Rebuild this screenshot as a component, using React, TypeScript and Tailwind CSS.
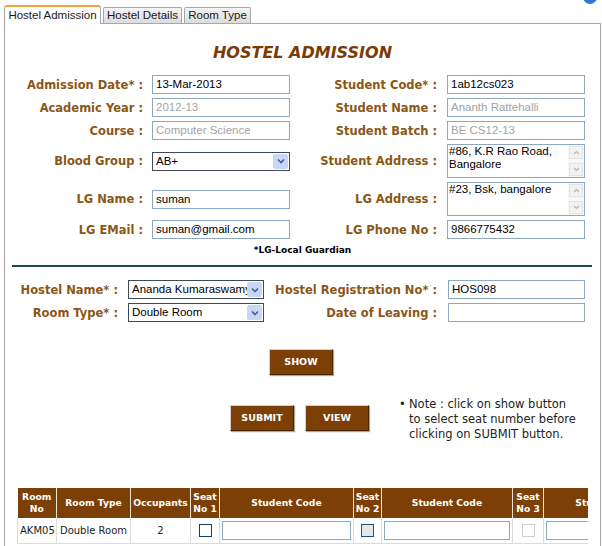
import React from "react";

const V = "font-['DejaVu_Sans',Verdana,sans-serif]";
const A = "font-['Liberation_Sans',Arial,sans-serif]";

function Label({ children, pr = "pr-[9px]" }: { children: React.ReactNode; pr?: string }) {
  return (
    <div className={`${V} ${pr} text-right text-[11.5px] font-bold leading-[14px] text-[#8b5716] whitespace-nowrap`}>
      {children}
    </div>
  );
}

function TextInput({ value = "", disabled = false }: { value?: string; disabled?: boolean }) {
  return (
    <div
      className={`${A} h-[19px] border border-[#8fa8c2] bg-white px-[3px] text-[11.5px] leading-[17px] whitespace-nowrap overflow-hidden ${
        disabled ? "text-[#a3a3a3]" : "text-black"
      }`}
    >
      {value}
    </div>
  );
}

function Select({ value }: { value: string }) {
  return (
    <div className={`${A} relative h-[19px] border border-[#3e4a5a] bg-white pl-[3px] pr-[18px] text-[11.5px] leading-[17px] text-black whitespace-nowrap overflow-hidden`}>
      {value}
      <div className="absolute right-[1px] top-[1px] flex h-[15px] w-[15px] items-center justify-center rounded-[2px] bg-[#c9d7f7]">
        <svg width="8" height="6" viewBox="0 0 8 6">
          <path d="M1 1.5 L4 4.5 L7 1.5" fill="none" stroke="#4a5f8a" strokeWidth="1.6" />
        </svg>
      </div>
    </div>
  );
}

function TextArea({ lines }: { lines: string[] }) {
  return (
    <div className={`${A} flex h-[34px] border border-[#8fa8c2] bg-white`}>
      <div className="flex-1 pl-[1px] text-[11.5px] leading-[13px] text-black overflow-hidden">
        {lines.map((l) => (
          <div key={l} className="whitespace-nowrap">{l}</div>
        ))}
      </div>
      <div className="flex w-[16px] flex-col justify-between bg-[#f7f7f7] p-[1px]">
        <div className="flex h-[13px] items-center justify-center border border-[#e4e4e4] bg-[#f2f2f2]">
          <svg width="7" height="5" viewBox="0 0 7 5">
            <path d="M1 4 L3.5 1.5 L6 4" fill="none" stroke="#b8b8b8" strokeWidth="1.2" />
          </svg>
        </div>
        <div className="flex h-[13px] items-center justify-center border border-[#e4e4e4] bg-[#f2f2f2]">
          <svg width="7" height="5" viewBox="0 0 7 5">
            <path d="M1 1 L3.5 3.5 L6 1" fill="none" stroke="#b8b8b8" strokeWidth="1.2" />
          </svg>
        </div>
      </div>
    </div>
  );
}

function Btn({ children }: { children: React.ReactNode }) {
  return (
    <div
      className={`${V} flex h-[26px] w-[64px] items-center justify-center border border-t-[#d9cfc4] border-l-[#d9cfc4] border-r-[#4a2600] border-b-[#4a2600] bg-[#7c3f06] text-[9.5px] font-bold text-white shadow-[1px_1px_1px_rgba(0,0,0,0.35)]`}
    >
      {children}
    </div>
  );
}

function Check({ variant }: { variant: "on" | "mid" | "off" }) {
  const cls =
    variant === "on"
      ? "border-[#1e3d63] bg-white"
      : variant === "mid"
      ? "border-[#2b4d78] bg-[#e3e7ec]"
      : "border-[#cfcfcf] bg-white";
  return <div className={`mx-auto h-[13px] w-[13px] border ${cls}`} />;
}

export default function App() {
  const th = `${V} border-r border-[#ede3d8] px-0 text-center text-[9.2px] font-bold leading-[12px] text-white whitespace-nowrap`;
  const td = `${V} border-r border-b border-[#dcdcdc] px-[2px] text-[10px] text-[#222] whitespace-nowrap`;
  return (
    <div className="relative h-[546px] w-[602px] overflow-hidden bg-white">
      <div className="absolute right-[5px] top-[-10px] h-[14px] w-[14px] rounded-full bg-[#2f78cc]" />
      <div className="pl-[4px] pt-[5px]">
        {/* Tabs */}
        <div className={`flex items-end gap-[2px] ${A} text-[11.5px] text-[#1a1a1a]`}>
          <div className="relative z-10 mb-[-1px] flex h-[19px] w-[97px] items-center justify-center rounded-t-[3px] border border-b-0 border-[#a8a8a8] border-t-[2px] border-t-[#f0a43a] bg-white">
            Hostel Admission
          </div>
          <div className="flex h-[16px] w-[79px] items-center justify-center rounded-t-[2px] border border-b-0 border-[#a8a8a8] bg-gradient-to-b from-[#f4f4f4] to-[#dcdcdc]">
            Hostel Details
          </div>
          <div className="flex h-[16px] w-[67px] items-center justify-center rounded-t-[2px] border border-b-0 border-[#a8a8a8] bg-gradient-to-b from-[#f4f4f4] to-[#dcdcdc]">
            Room Type
          </div>
        </div>

        {/* Panel */}
        <div className="h-[600px] w-[597px] border border-[#a8a8a8] bg-white">
          <div className={`${V} pt-[19px] text-center text-[16px] font-bold italic leading-[20px] text-[#7b3b06]`}>
            HOSTEL ADMISSION
          </div>

          <div className="mt-[12px] grid grid-cols-[147px_138px_157px_138px] items-center gap-y-[4px]">
            <Label>Admission Date* :</Label>
            <TextInput value="13-Mar-2013" />
            <Label pr="pr-[10px]">Student Code* :</Label>
            <TextInput value="1ab12cs023" />

            <Label>Academic Year :</Label>
            <TextInput value="2012-13" disabled />
            <Label pr="pr-[10px]">Student Name :</Label>
            <TextInput value="Ananth Rattehalli" disabled />

            <Label>Course :</Label>
            <TextInput value="Computer Science" disabled />
            <Label pr="pr-[10px]">Student Batch :</Label>
            <TextInput value="BE CS12-13" disabled />

            <Label>Blood Group :</Label>
            <Select value="AB+" />
            <Label pr="pr-[10px]">Student Address :</Label>
            <TextArea lines={["#86, K.R Rao Road,", "Bangalore"]} />

            <Label>LG Name :</Label>
            <TextInput value="suman" />
            <Label pr="pr-[10px]">LG Address :</Label>
            <TextArea lines={["#23, Bsk, bangalore"]} />

            <Label>LG EMail :</Label>
            <TextInput value="suman@gmail.com" />
            <Label pr="pr-[10px]">LG Phone No :</Label>
            <TextInput value="9866775432" />
          </div>

          <div className={`${V} mt-[5px] text-center text-[9px] font-bold leading-[12px] text-black`}>
            *LG-Local Guardian
          </div>

          <div className="ml-[7px] mt-[9px] h-[2px] w-[580px] bg-[#1f4c48]" />

          <div className="mt-[13px] grid grid-cols-[123px_136px_184px_137px] items-center gap-y-[4px]">
            <Label pr="pr-[10px]">Hostel Name* :</Label>
            <Select value="Ananda Kumaraswamy" />
            <Label pr="pr-[11px]">Hostel Registration No* :</Label>
            <TextInput value="HOS098" />

            <Label pr="pr-[10px]">Room Type* :</Label>
            <Select value="Double Room" />
            <Label pr="pr-[11px]">Date of Leaving :</Label>
            <TextInput value="" />
          </div>

          <div className="mt-[27px] flex justify-center pr-[3px]">
            <Btn>SHOW</Btn>
          </div>

          <div className="mt-[22px] flex items-start pl-[225px]">
            <div className="mt-[8px] flex gap-[11px]">
              <Btn>SUBMIT</Btn>
              <Btn>VIEW</Btn>
            </div>
            <div className={`${V} ml-[30px] flex text-[11.5px] leading-[15px] text-[#222]`}>
              <span className="w-[10px]">•</span>
              <div>
                Note : click on show button
                <br />
                to select seat number before
                <br />
                clicking on SUBMIT button.
              </div>
            </div>
          </div>

          <div className="ml-[12px] mt-[46px] w-[571px] overflow-hidden">
            <table className="w-[660px] table-fixed border-collapse">
              <colgroup>
                <col className="w-[39px]" />
                <col className="w-[74px]" />
                <col className="w-[60px]" />
                <col className="w-[29px]" />
                <col className="w-[134px]" />
                <col className="w-[28px]" />
                <col className="w-[131px]" />
                <col className="w-[31px]" />
                <col className="w-[134px]" />
              </colgroup>
              <thead>
                <tr className="h-[30px] bg-[#7c3f06]">
                  <th className={th}>Room<br />No</th>
                  <th className={th}>Room Type</th>
                  <th className={th}>Occupants</th>
                  <th className={th}>Seat<br />No 1</th>
                  <th className={th}>Student Code</th>
                  <th className={th}>Seat<br />No 2</th>
                  <th className={th}>Student Code</th>
                  <th className={th}>Seat<br />No 3</th>
                  <th className={th}>Student Code</th>
                </tr>
              </thead>
              <tbody>
                <tr className="h-[25px]">
                  <td className={`${td} border-l`}>AKM05</td>
                  <td className={`${td} text-center`}>Double Room</td>
                  <td className={`${td} text-center`}>2</td>
                  <td className={td}><Check variant="on" /></td>
                  <td className={td}><TextInput value="" /></td>
                  <td className={td}><Check variant="mid" /></td>
                  <td className={td}><TextInput value="" /></td>
                  <td className={td}><Check variant="off" /></td>
                  <td className={td}><TextInput value="" /></td>
                </tr>
              </tbody>
            </table>
          </div>
        </div>
      </div>
    </div>
  );
}
